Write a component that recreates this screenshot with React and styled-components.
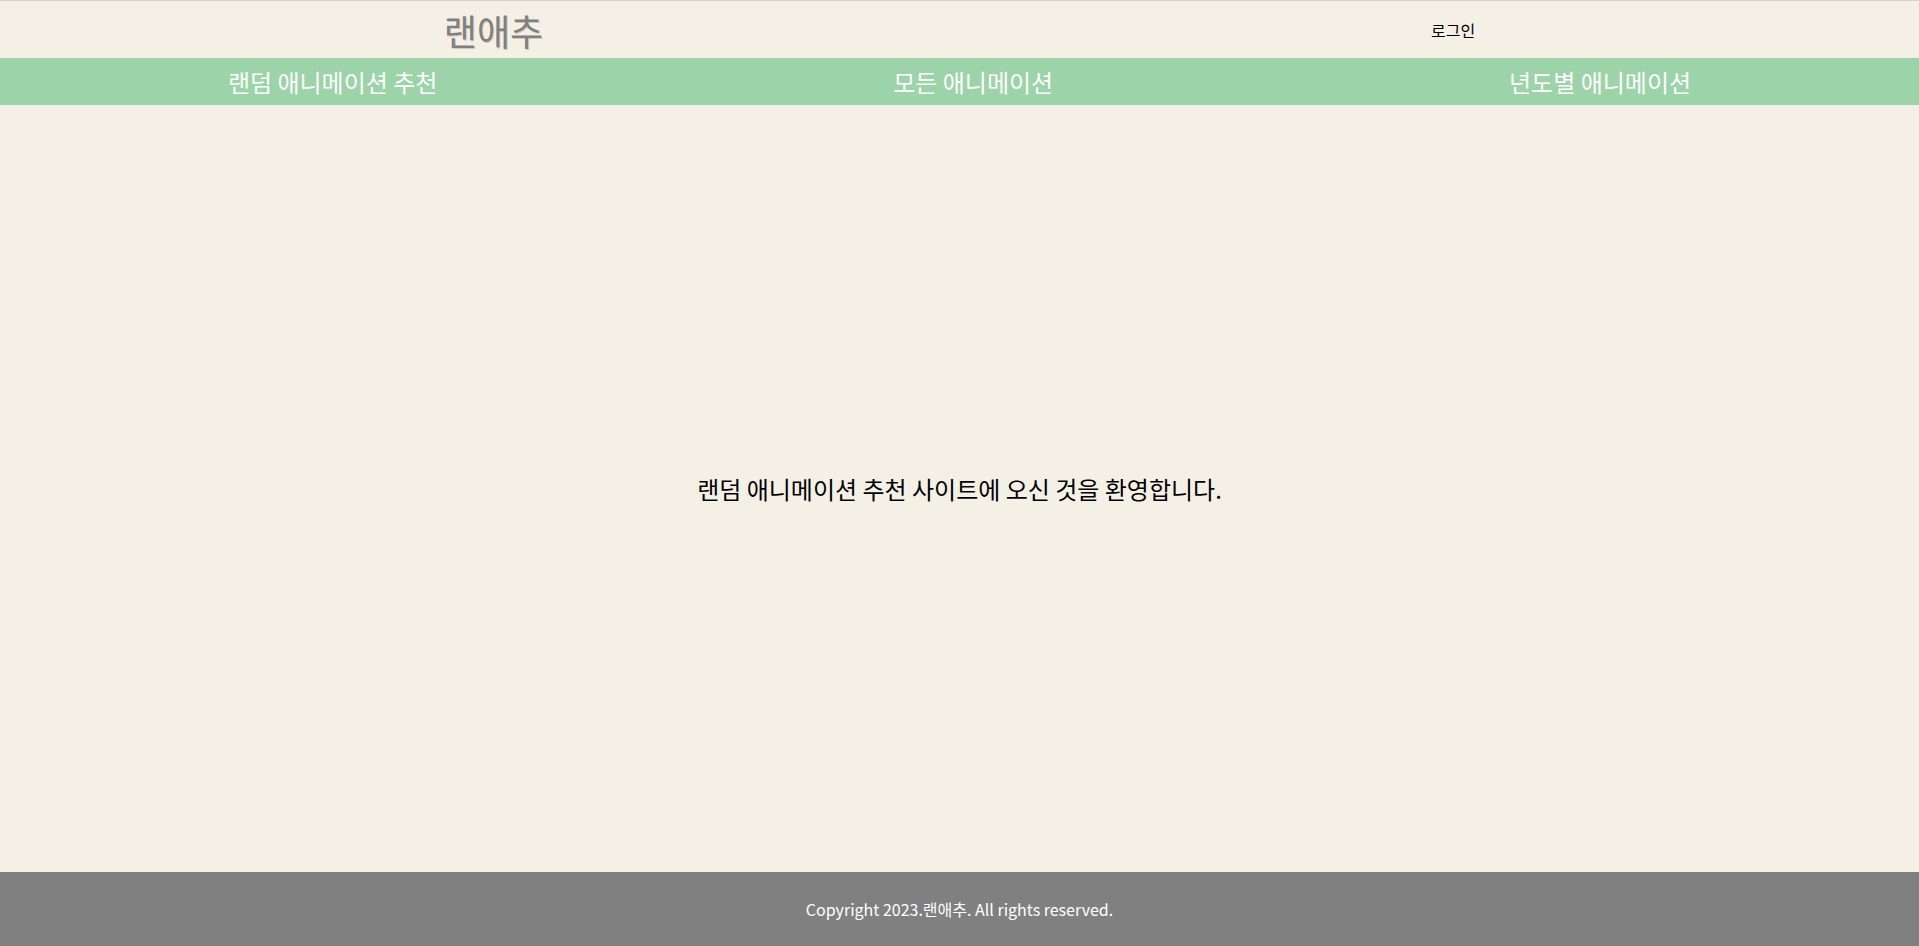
import React from 'react';
import styled, {createGlobalStyle} from 'styled-components';

const GlobalStyle = createGlobalStyle`
  html, body {
    margin: 0;
    padding: 0;
    height: 100%;
    background: #f5f0e6;
    font-family: "Noto Sans CJK KR", "Noto Sans", sans-serif;
  }
  #root {
    height: 100%;
  }
`;

const StyledPage = styled.div`
  display: flex;
  flex-direction: column;
  min-height: 100vh;
  background: #f5f0e6;
`;

const StyledHeader = styled.header`
  display: flex;
  justify-content: space-around;
  align-items: center;
  height: 57px;
  border-top: 1px solid #d2d2d2;
`;

const StyledLogo = styled.div`
  font-size: 36px;
  font-weight: 400;
  color: #808080;
  text-shadow: 1px 1px 0 #cfc8b8;
  line-height: 1;
`;

const StyledLogin = styled.button`
  border: none;
  background: none;
  padding: 0;
  font-family: inherit;
  font-size: 16px;
  font-weight: 400;
  color: #000;
  cursor: pointer;
`;

const StyledNav = styled.nav`
  display: flex;
  justify-content: space-around;
  align-items: center;
  height: 47px;
  background: #9dd3a8;
`;

const StyledNavItem = styled.a`
  font-size: 24px;
  font-weight: 400;
  color: #fff;
  text-decoration: none;
  cursor: pointer;
`;

const StyledMain = styled.main`
  flex: 1;
  display: flex;
  align-items: center;
  justify-content: center;
`;

const StyledWelcome = styled.p`
  margin: 0;
  font-size: 24px;
  font-weight: 400;
  color: #000;
`;

const StyledFooter = styled.footer`
  display: flex;
  align-items: center;
  justify-content: center;
  height: 74px;
  background: #808080;
  color: #fff;
  font-size: 16px;
`;

const navItems = ['랜덤 애니메이션 추천', '모든 애니메이션', '년도별 애니메이션'];

export default function App() {
  return (
    <>
      <GlobalStyle />
      <StyledPage>
        <StyledHeader>
          <StyledLogo>랜애추</StyledLogo>
          <StyledLogin>로그인</StyledLogin>
        </StyledHeader>
        <StyledNav>
          {navItems.map((item) => (
            <StyledNavItem key={item}>{item}</StyledNavItem>
          ))}
        </StyledNav>
        <StyledMain>
          <StyledWelcome>랜덤 애니메이션 추천 사이트에 오신 것을 환영합니다.</StyledWelcome>
        </StyledMain>
        <StyledFooter>Copyright 2023.랜애추. All rights reserved.</StyledFooter>
      </StyledPage>
    </>
  );
}
